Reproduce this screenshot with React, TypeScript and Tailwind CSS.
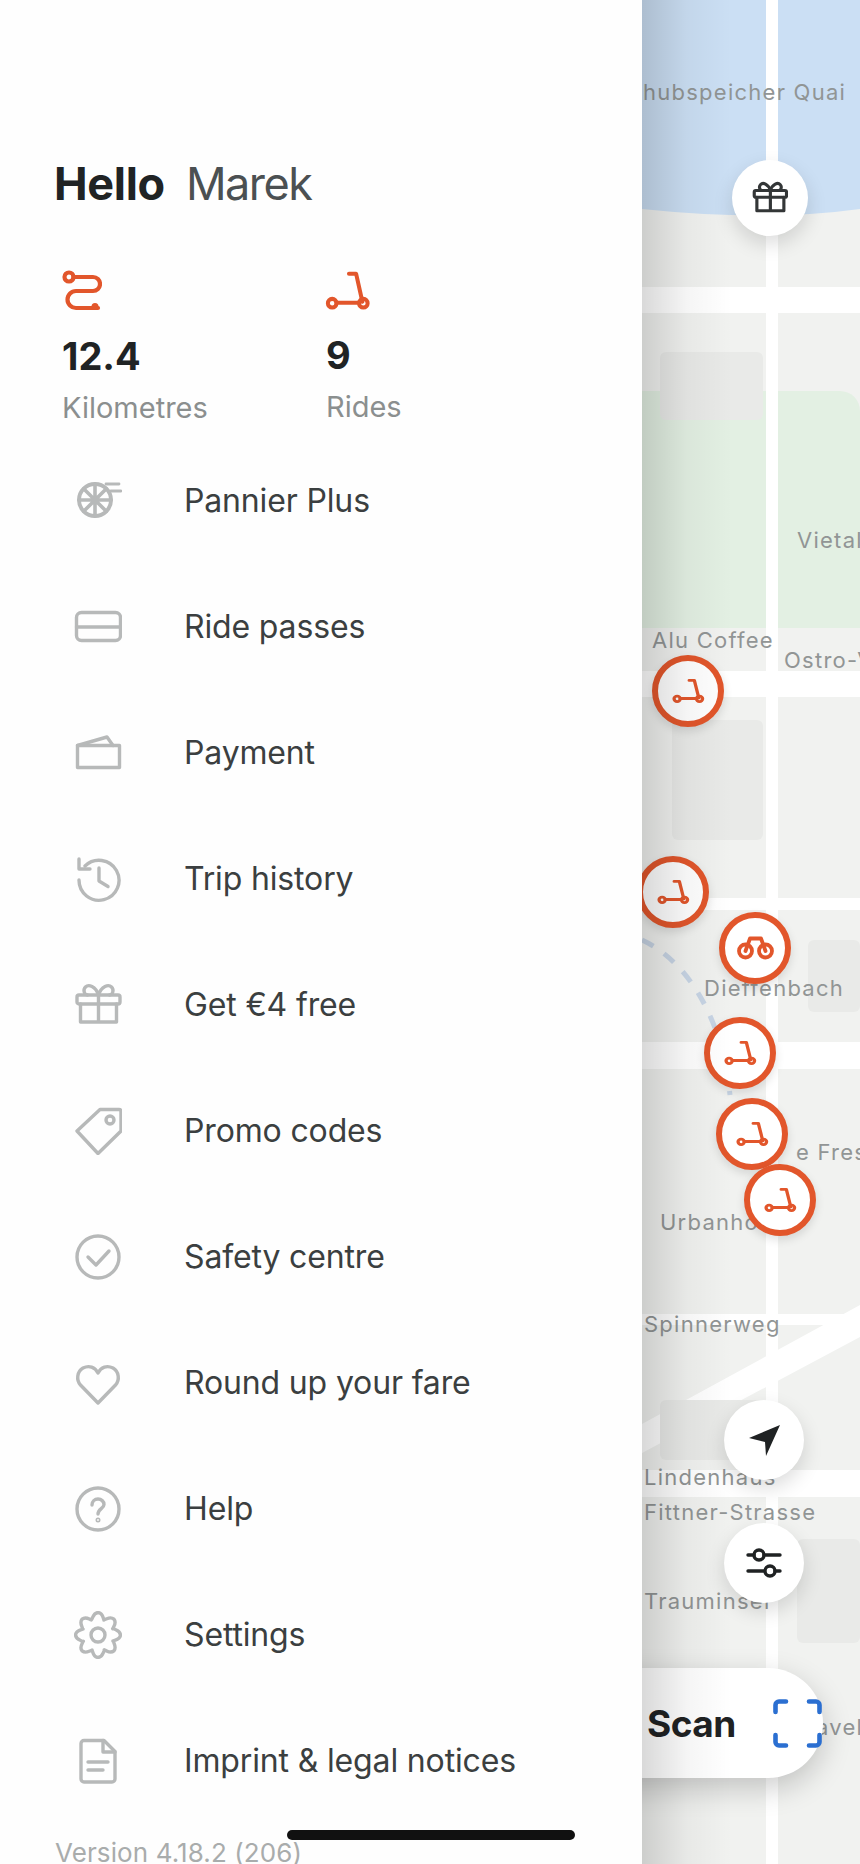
import React from "react";

const G = "#b7b9b9";
const O = "#e2562b";

function Scooter({ size = 48, height, color = O, sw = 4.8 }: { size?: number; height?: number; color?: string; sw?: number }) {
  return (
    <svg width={size} height={height ?? size * 0.9} viewBox="0 0 48 43" preserveAspectRatio="none" fill="none" stroke={color} strokeWidth={sw} strokeLinecap="round" strokeLinejoin="round">
      <path d="M25 4h7.500l6.500 29" />
      <path d="M12 34h23" />
      <circle cx="7.500" cy="34.500" r="4.500" />
      <circle cx="40" cy="34.500" r="4.500" />
    </svg>
  );
}

function Bike() {
  return (
    <svg width="37" height="24" viewBox="0 0 37 24" fill="none" stroke={O} strokeWidth="3.800" strokeLinecap="round" strokeLinejoin="round">
      <circle cx="8.500" cy="15" r="6.500" />
      <circle cx="28.500" cy="15" r="6.500" />
      <path d="M8.500 15 13 2.500H24L28.500 15" />
    </svg>
  );
}

function Route() {
  return (
    <svg width="40" height="42" viewBox="0 0 40 42" fill="none" stroke={O} strokeWidth="4.200" strokeLinecap="round" strokeLinejoin="round">
      <circle cx="7" cy="7" r="4.500" />
      <path d="M11.500 7H31a7 7 0 0 1 0 14H14a8.500 8.500 0 0 0 0 17H36" />
      <circle cx="33" cy="36.500" r="3.500" fill={O} stroke="none" />
    </svg>
  );
}

function gearPath() {
  const cx = 24;
  const cy = 24;
  const pt = (deg: number, r: number) => {
    const a = (deg * Math.PI) / 180;
    return (cx + r * Math.cos(a)).toFixed(2) + " " + (cy + r * Math.sin(a)).toFixed(2);
  };
  let d = "";
  for (let i = 0; i < 8; i++) {
    const c = -90 + i * 45;
    const start = pt(c - 24, 16.5);
    d += (i === 0 ? "M" : "Q" + pt(c - 22.5, 15.5) + " ") + start;
    d += "C" + pt(c - 15, 18) + " " + pt(c - 13, 22.5) + " " + pt(c, 22.5);
    d += "C" + pt(c + 13, 22.5) + " " + pt(c + 15, 18) + " " + pt(c + 21, 16.5);
  }
  return d + "Z";
}

const icons: Record<string, React.ReactNode> = {
  wheel: (
    <>
      <circle cx="21" cy="23" r="16" strokeWidth="4" />
      <path d="M21 7v32M5 23h32M9.700 11.700l22.600 22.600M32.300 11.700 9.700 34.300" strokeWidth="3.600" />
      <path d="M32 7h13M37 14h10" strokeWidth="2.800" />
    </>
  ),
  card: (
    <>
      <rect x="2.500" y="9.500" width="44" height="28" rx="5" />
      <path d="M2.500 24h44" />
    </>
  ),
  wallet: (
    <>
      <path d="M3.500 16.500h42v22h-42z" />
      <path d="M3.500 16.500 33 8l6 8.500" />
    </>
  ),
  history: (
    <>
      <path d="M5 4v10h11" />
      <path d="M11 11A20 20 0 1 1 5 25" />
      <path d="M25 13v13l9 5.500" />
    </>
  ),
  gift: (
    <>
      <rect x="3" y="14" width="43" height="9" rx="2" />
      <path d="M6.500 23v18h36V23M24.500 14v27" />
      <path d="M24.500 14c-3-9-10-11-13-8-3 3-1 8 2 8M24.500 14c3-9 10-11 13-8 3 3 1 8-2 8" />
    </>
  ),
  tag: (
    <>
      <path d="M3 24 26 2.500H45a2 2 0 0 1 2 2V24L24 46.500z" />
      <circle cx="36" cy="13" r="4" />
    </>
  ),
  check: (
    <>
      <circle cx="24" cy="24" r="21" />
      <path d="M14 24l8 8 13-14" />
    </>
  ),
  heart: (
    <path d="M24 44 6.500 26C2 21 3 12.500 9 9c6-3 12-1 15 5 3-6 9-8 15-5 6 3.500 7 12 2.500 17z" />
  ),
  help: (
    <>
      <circle cx="24" cy="24" r="21" />
      <path d="M18 20c0-3.500 2.700-6 6-6s6 2.500 6 5.500c0 4-6 4.500-6 9.500" />
      <circle cx="24" cy="35" r="0.800" />
    </>
  ),
  gear: (
    <>
      <path d={gearPath()} />
      <circle cx="24" cy="24" r="7" />
    </>
  ),
  doc: (
    <>
      <path d="M10 3.500H30L41 14.500V42a3 3 0 0 1-3 3H10a3 3 0 0 1-3-3V6.500a3 3 0 0 1 3-3z" />
      <path d="M29 3.500V15H41" />
      <path d="M14 25H34M14 33H29" />
    </>
  ),
};

const menu: [string, string][] = [
  ["wheel", "Pannier Plus"],
  ["card", "Ride passes"],
  ["wallet", "Payment"],
  ["history", "Trip history"],
  ["gift", "Get €4 free"],
  ["tag", "Promo codes"],
  ["check", "Safety centre"],
  ["heart", "Round up your fare"],
  ["help", "Help"],
  ["gear", "Settings"],
  ["doc", "Imprint & legal notices"],
];

const labels: { t: string; x: number; y: number }[] = [
  { t: "hubspeicher Quai", x: 643, y: 77 },
  { t: "Vietal", x: 797, y: 525 },
  { t: "Alu Coffee", x: 652, y: 625 },
  { t: "Ostro-V", x: 784, y: 645 },
  { t: "Dieffenbach", x: 704, y: 973 },
  { t: "e Fres", x: 796, y: 1137 },
  { t: "Urbanhof", x: 660, y: 1207 },
  { t: "Spinnerweg", x: 644, y: 1309 },
  { t: "Lindenhaus", x: 644, y: 1462 },
  { t: "Fittner-Strasse", x: 644, y: 1497 },
  { t: "Trauminsel", x: 644, y: 1586 },
  { t: "avel", x: 816, y: 1712 },
];

const blocks: [number, number, number, number][] = [
  [660, 352, 103, 68],
  [672, 720, 91, 120],
  [808, 940, 52, 72],
  [660, 1400, 103, 60],
  [797, 1539, 63, 104],
];

const markers: { x: number; y: number; bike?: boolean }[] = [
  { x: 688, y: 691 },
  { x: 673, y: 892 },
  { x: 755, y: 948, bike: true },
  { x: 740, y: 1053 },
  { x: 752, y: 1134 },
  { x: 780, y: 1200 },
];

function Map() {
  return (
    <div className="relative h-full flex-1 overflow-hidden bg-[#f1f2f0] font-['Inter',sans-serif]">
      {/* the map is a free canvas; x offsets are taken from the 642 drawer edge */}
      <svg className="absolute left-0 top-0" width="218" height="1864" viewBox="642 0 218 1864" fill="none">
        <path d="M642 0H860V209Q766 222 642 209Z" fill="#cbdff4" />
        <path d="M642 391H840a20 20 0 0 1 20 20V628H642Z" fill="#e3f0e3" />
        <path d="M642 1424L860 1305V1337L642 1453Z" fill="#fff" />
        <path d="M642 1314H860V1325H642Z" fill="#fff" />
        <path d="M642 940C675 955 720 1000 730 1095" stroke="#c8d5e5" strokeWidth="5" strokeDasharray="13 13" />
      </svg>
      <div className="absolute left-[124px] top-0 h-full w-3 bg-white" />
      <div className="absolute inset-x-0 top-[287px] h-[26px] bg-white" />
      <div className="absolute inset-x-0 top-[671px] h-[26px] bg-white" />
      <div className="absolute inset-x-0 top-[898px] h-3 bg-white" />
      <div className="absolute inset-x-0 top-[1042px] h-[27px] bg-white" />
      <div className="absolute inset-x-0 top-[1470px] h-[27px] bg-white" />
      {blocks.map(([x, y, w, h]) => (
        <div key={x + "-" + y} className="absolute rounded-md bg-[#e9eae8]" style={{ left: x - 642, top: y, width: w, height: h }} />
      ))}
      {labels.map((l) => (
        <div key={l.t} className="absolute whitespace-nowrap text-[22px] leading-[30px] tracking-[1.25px] text-[#919595]" style={{ left: l.x - 642, top: l.y }}>
          {l.t}
        </div>
      ))}
      {markers.map((m) => (
        <div
          key={m.x + "-" + m.y}
          className="absolute flex h-[72px] w-[72px] items-center justify-center rounded-full border-[6px] border-[#e2562b] bg-white shadow-[0_4px_10px_rgba(0,0,0,0.12)]"
          style={{ left: m.x - 642 - 36, top: m.y - 36 }}
        >
          {m.bike ? <Bike /> : <Scooter size={33} height={26} />}
        </div>
      ))}
      <div className="absolute left-[90px] top-[160px] flex h-[76px] w-[76px] items-center justify-center rounded-full bg-white shadow-[0_8px_20px_rgba(0,0,0,0.14)]">
        <svg width="36" height="36" viewBox="0 0 48 48" fill="none" stroke="#333637" strokeWidth="4.200" strokeLinecap="round" strokeLinejoin="round">
          {icons.gift}
        </svg>
      </div>
      <div className="absolute left-[82px] top-[1400px] flex h-[80px] w-[80px] items-center justify-center rounded-full bg-white shadow-[0_8px_20px_rgba(0,0,0,0.14)]">
        <svg width="36" height="36" viewBox="0 0 36 36" fill="#1f2223">
          <path d="M3 16 34 3 20 34 19 20z" />
        </svg>
      </div>
      <div className="absolute left-[82px] top-[1523px] flex h-[80px] w-[80px] items-center justify-center rounded-full bg-white shadow-[0_8px_20px_rgba(0,0,0,0.14)]">
        <svg width="36" height="32" viewBox="0 0 36 32" fill="none" stroke="#1f2223" strokeWidth="3.400" strokeLinecap="round">
          <path d="M2 8h6M18 8h16M2 24h16M29 24h5" />
          <circle cx="13" cy="8" r="5" />
          <circle cx="24" cy="24" r="5" />
        </svg>
      </div>
      <div className="absolute left-[-120px] top-[1668px] flex h-[110px] w-[301px] items-center rounded-r-[55px] bg-white pl-[125px] shadow-[0_10px_30px_rgba(0,0,0,0.2)]">
        <span className="text-[37px] font-bold leading-none tracking-[-0.5px] text-[#1f2223]">Scan</span>
        <svg className="absolute left-[251px] top-[31px]" width="49" height="49" viewBox="0 0 49 49" fill="none" stroke="#2b6fd1" strokeWidth="4.600" strokeLinecap="round" strokeLinejoin="round">
          <path d="M2.500 13V6a3.500 3.500 0 0 1 3.500-3.500h7M36 2.500h7A3.500 3.500 0 0 1 46.500 6v7M46.500 36v7a3.500 3.500 0 0 1-3.500 3.500h-7M13 46.500H6A3.500 3.500 0 0 1 2.500 43v-7" />
        </svg>
      </div>
      <div className="absolute inset-y-0 left-0 w-[90px] bg-gradient-to-r from-black/15 via-black/4 to-transparent" />
    </div>
  );
}

export default function App() {
  return (
    <div className="relative flex h-[1864px] w-[860px] overflow-hidden bg-white font-['Inter',sans-serif]">
      <aside className="z-10 flex h-full w-[642px] shrink-0 flex-col overflow-hidden bg-[#fefefe]">
        <h1 className="ml-[54px] mt-[161px] flex h-[56px] items-center gap-[21px] text-[45px] leading-none">
          <span className="font-bold tracking-[-0.3px] text-[#202324]">Hello</span>
          <span className="font-normal tracking-[-1.5px] text-[#4b5052]">Marek</span>
        </h1>
        <div className="ml-[62px] mt-[64px] flex">
          <div className="flex w-[264px] flex-col">
            <Route />
            <div className="mt-[21px] text-[38px] font-bold leading-[46px] text-[#202324]">12.4</div>
            <div className="mt-[11px] text-[29px] leading-[36px] text-[#8b8f8f]">Kilometres</div>
          </div>
          <div className="flex flex-col">
            <div className="-ml-px">
              <Scooter size={46} sw={4.200} />
            </div>
            <div className="mt-[21px] text-[38px] font-bold leading-[46px] text-[#202324]">9</div>
            <div className="mt-[11px] text-[29px] leading-[36px] text-[#8b8f8f]">Rides</div>
          </div>
        </div>
        <ul className="mt-[12px] flex flex-col">
          {menu.map(([icon, label]) => (
            <li key={label} className="flex h-[126px] items-center">
              <span className="ml-[74px] flex h-12 w-12 items-center justify-center">
                <svg width="48" height="48" viewBox="0 0 48 48" fill="none" stroke={G} strokeWidth="3.400" strokeLinecap="round" strokeLinejoin="round">
                  {icons[icon]}
                </svg>
              </span>
              <span className="ml-[62px] text-[32px] leading-[40px] tracking-[-0.15px] text-[#3b3f40]">{label}</span>
            </li>
          ))}
        </ul>
        <div className="ml-[55px] mt-[14px] text-[26px] leading-[30px] tracking-[0.1px] text-[#a9acac]">Version 4.18.2 (206)</div>
      </aside>
      <Map />
      <div className="absolute left-[287px] top-[1830px] z-20 h-[10px] w-[288px] rounded-full bg-[#111]" />
    </div>
  );
}
